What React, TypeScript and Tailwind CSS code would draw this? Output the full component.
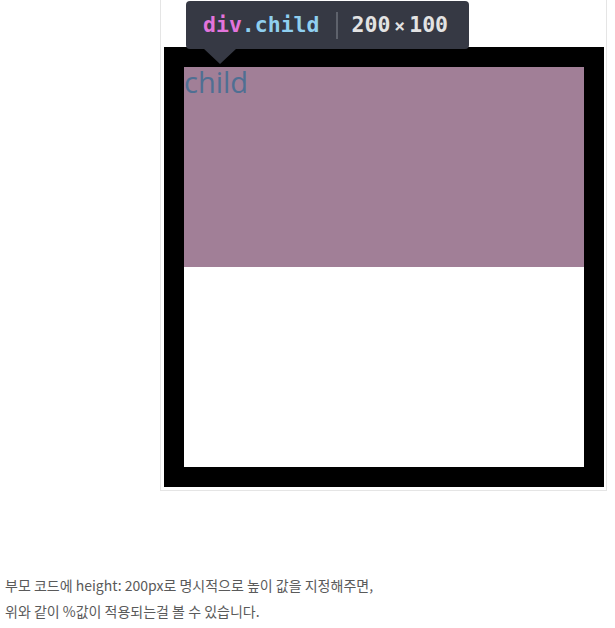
import React from "react";

export default function App() {
  return (
    <div className="w-[615px] h-[628px] bg-white overflow-hidden">
      <div className="relative ml-[160px] w-[447px] h-[491px] pt-[47px] pl-[3px] border border-t-0 border-[#e5e5e5]">
        <div className="w-[440px] h-[440px] border-[20px] border-black bg-white">
          <div
            className="w-[400px] h-[200px] bg-[#a17f97] text-[#4f6f93] text-[29px] leading-[30px]"
            style={{ fontFamily: '"Open Sans", "Noto Sans", sans-serif' }}
          >
            child
          </div>
        </div>
        <div className="absolute left-[25px] top-[1px] w-[283px] h-[48px] rounded-[4px] bg-[#363944] flex items-center pl-[17px]"
          style={{ fontFamily: '"DejaVu Sans Mono", monospace' }}
        >
          <span className="text-[21.5px] font-bold text-[#e274dc]">div</span>
          <span className="text-[21.5px] font-bold text-[#8fcff0]">.child</span>
          <span className="ml-[16px] mr-[14px] w-[2px] h-[27px] bg-[#5e626c]" />
          <span className="text-[21.5px] font-bold text-[#e3e3e3]">200</span>
          <span className="text-[18px] font-bold text-[#e3e3e3] mx-[4px]">×</span>
          <span className="text-[21.5px] font-bold text-[#e3e3e3]">100</span>
          <div className="absolute left-[17px] top-[47px] w-0 h-0 border-l-[17px] border-r-[17px] border-t-[16px] border-l-transparent border-r-transparent border-t-[#363944]" />
        </div>
      </div>
      <div
        className="mt-[81px] pl-[5px] text-[14px] leading-[26px] text-[#5a5a5a]"
        style={{ fontFamily: '"Noto Sans CJK KR", "Noto Sans", sans-serif' }}
      >
        <p>부모 코드에 height: 200px로 명시적으로 높이 값을 지정해주면,</p>
        <p>위와 같이 %값이 적용되는걸 볼 수 있습니다.</p>
      </div>
    </div>
  );
}
